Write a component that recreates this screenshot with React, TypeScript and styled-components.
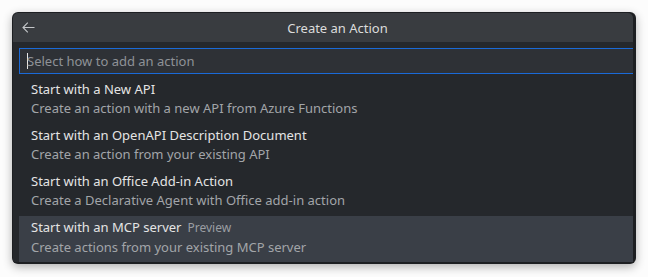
import styled, { createGlobalStyle } from 'styled-components';

const GlobalStyle = createGlobalStyle`
  html, body {
    margin: 0;
    padding: 0;
    background: #fcfcfc;
  }
  body {
    font-family: 'Noto Sans', 'Open Sans', sans-serif;
  }
`;

// 선택지 목록
const actions = [
  {
    title: 'Start with a New API',
    desc: 'Create an action with a new API from Azure Functions',
  },
  {
    title: 'Start with an OpenAPI Description Document',
    desc: 'Create an action from your existing API',
  },
  {
    title: 'Start with an Office Add-in Action',
    desc: 'Create a Declarative Agent with Office add-in action',
  },
  {
    title: 'Start with an MCP server',
    desc: 'Create actions from your existing MCP server',
    badge: 'Preview',
    selected: true,
  },
];

const App = () => {
  return (
    <>
      <GlobalStyle />
      <Page>
        <Frame>
          <TitleBar>
            <BackButton aria-label='Back'>
              <svg width='13' height='11' viewBox='0 0 13 11' fill='none'>
                <path
                  d='M12.5 5.5H1M5.8 0.7L1 5.5l4.8 4.8'
                  stroke='#c4c6c9'
                  strokeWidth='1.1'
                />
              </svg>
            </BackButton>
            <Title>Create an Action</Title>
          </TitleBar>
          <Body>
            <InputBox>
              <Caret />
              <Placeholder>Select how to add an action</Placeholder>
            </InputBox>
            <List>
              {actions.map((a) => (
                <Item key={a.title} selected={!!a.selected}>
                  <ItemTitle>
                    {a.title}
                    {a.badge && <Badge>{a.badge}</Badge>}
                  </ItemTitle>
                  <ItemDesc>{a.desc}</ItemDesc>
                </Item>
              ))}
            </List>
          </Body>
        </Frame>
      </Page>
    </>
  );
};
export default App;

const Page = styled.div`
  padding: 12px;
  width: 648px;
  height: 277px;
  box-sizing: border-box;
`;

const Frame = styled.div`
  width: 624px;
  height: 252px;
  box-sizing: border-box;
  padding: 1px 3px 2px 1px;
  background: #1d1f22;
  border-radius: 6px;
  box-shadow: 0 3px 10px rgba(0, 0, 0, 0.3);
  display: flex;
  flex-direction: column;
  overflow: hidden;
`;

const TitleBar = styled.div`
  height: 29px;
  flex: none;
  background: #393c40;
  display: flex;
  align-items: center;
  position: relative;
  border-radius: 5px 5px 0 0;
`;

const BackButton = styled.div`
  position: absolute;
  left: 9px;
  top: 9px;
  display: flex;
`;

const Title = styled.div`
  flex: 1;
  text-align: center;
  color: #dcdcdc;
  font-size: 13px;
  padding-left: 29px;
`;

const Body = styled.div`
  flex: 1;
  background: #25282c;
  padding: 6px 0 0 6px;
  display: flex;
  flex-direction: column;
  gap: 4px;
`;

const InputBox = styled.div`
  height: 26px;
  box-sizing: border-box;
  border: 1px solid #1a6ad8;
  border-right: none;
  background: #2e3136;
  display: flex;
  align-items: center;
  padding-left: 7px;
`;

const Caret = styled.div`
  width: 1px;
  height: 16px;
  background: #e6e6e6;
`;

const Placeholder = styled.span`
  color: #8e9297;
  font-size: 13px;
  margin-left: -1px;
`;

const List = styled.div`
  display: flex;
  flex-direction: column;
`;

const Item = styled.div<{ selected: boolean }>`
  height: 46px;
  box-sizing: border-box;
  padding: 1px 0 0 12px;
  background: ${(p) => (p.selected ? '#3a3f47' : 'transparent')};
`;

const ItemTitle = styled.div`
  line-height: 20px;
  font-size: 13px;
  color: #e4e4e4;
  display: flex;
  align-items: baseline;
`;

const Badge = styled.span`
  margin-left: 6px;
  font-size: 12px;
  color: #9a9ea3;
`;

const ItemDesc = styled.div`
  line-height: 19px;
  font-size: 13px;
  color: #a2a5a9;
`;
